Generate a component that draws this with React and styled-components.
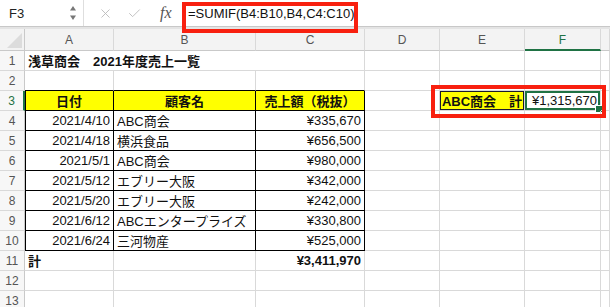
import React from 'react';
import styled, { createGlobalStyle } from 'styled-components';
import { X, Check } from 'lucide-react';

const GlobalStyle = createGlobalStyle`
  html, body { margin: 0; padding: 0; background: #fff; }
  body { font-family: "Liberation Sans", "Noto Sans CJK JP", sans-serif; }
  * { box-sizing: border-box; }
`;

const GRID = '#d9d9d9';
const GREEN = '#1f7244';

const Page = styled.div`
  position: relative;
  width: 610px;
  height: 307px;
  overflow: hidden;
  background: #fff;
`;

// barre de formule
const Toolbar = styled.div`
  display: flex;
  height: 27px;
  border-bottom: 1px solid #c8c8c8;
  background: #fff;
`;

const NameBox = styled.div`
  display: flex;
  align-items: center;
  justify-content: space-between;
  width: 84px;
  padding: 0 6px 0 9px;
  font-size: 13px;
  color: #222;
  border-right: 1px solid #dedede;
`;

const Spin = styled.svg`
  display: block;
`;

const Actions = styled.div`
  display: flex;
  align-items: center;
  width: 98px;
  padding-left: 14px;
  gap: 14px;
  color: #b9b9b9;
`;

const Fx = styled.span`
  margin-left: 4px;
  font-family: "Liberation Serif", serif;
  font-style: italic;
  font-size: 16px;
  color: #555;
`;

const Formula = styled.div`
  flex: 1;
  display: flex;
  align-items: center;
  padding-left: 6px;
  font-size: 13px;
  color: #111;
`;

const Band = styled.div`
  height: 2px;
  background: #e4e4e4;
`;

const Sheet = styled.div`
  display: grid;
  grid-template-columns: 25px 89px 142px 109px 75px 85px 76px 1fr;
  grid-template-rows: 22px repeat(13, 20px);
`;

const Corner = styled.div`
  position: relative;
  background: #f3f3f3;
  border-right: 1px solid #c9c9c9;
  border-bottom: 1px solid #c9c9c9;

  &::after {
    content: '';
    position: absolute;
    right: 2px;
    bottom: 2px;
    border-style: solid;
    border-width: 0 0 15px 15px;
    border-color: transparent transparent #dcdcdc transparent;
  }
`;

const ColHead = styled.div`
  display: flex;
  align-items: center;
  justify-content: center;
  background: #f3f3f3;
  border-right: 1px solid ${GRID};
  border-bottom: ${(p) => (p.$active ? `2px solid ${GREEN}` : '1px solid #c9c9c9')};
  font-size: 12px;
  color: ${(p) => (p.$active ? GREEN : '#555')};
  padding-top: ${(p) => (p.$active ? '1px' : '0')};
`;

const RowHead = styled.div`
  display: flex;
  align-items: center;
  justify-content: center;
  background: #f7f7f7;
  border-right: ${(p) => (p.$active ? `2px solid ${GREEN}` : '1px solid #c9c9c9')};
  border-bottom: 1px solid ${GRID};
  font-size: 12px;
  color: ${(p) => (p.$active ? GREEN : '#555')};
`;

const Cell = styled.div`
  position: relative;
  display: flex;
  align-items: center;
  justify-content: ${(p) => (p.$align === 'right' ? 'flex-end' : p.$align === 'center' ? 'center' : 'flex-start')};
  padding: 0 3px;
  grid-column: ${(p) => (p.$span ? `span ${p.$span}` : 'auto')};
  white-space: nowrap;
  font-size: 13px;
  font-weight: ${(p) => (p.$bold ? 700 : 400)};
  color: #111;
  background: ${(p) => p.$bg || 'transparent'};
  border-right: 1px solid ${(p) => (p.$edgeR ? '#000' : GRID)};
  border-bottom: 1px solid ${(p) => (p.$edgeB ? '#000' : GRID)};
  box-shadow: ${(p) =>
    p.$boxed ? 'inset 0 0 0 1px #1a1a2a' : p.$edgeL ? 'inset 1px 0 0 #000' : 'none'};
`;

const Selected = styled(Cell)`
  box-shadow: inset 0 0 0 2px ${GREEN};

  &::after {
    content: '';
    position: absolute;
    right: -3px;
    bottom: -3px;
    width: 6px;
    height: 6px;
    background: ${GREEN};
    border: 1px solid #fff;
  }
`;

// cadres rouges d'annotation
const RedBox = styled.div`
  position: absolute;
  border: 4px solid #f8200f;
  pointer-events: none;
`;

const cols = ['A', 'B', 'C', 'D', 'E', 'F', ''];

const ventes = [
  ['2021/4/10', 'ABC商会', '¥335,670'],
  ['2021/4/18', '横浜食品', '¥656,500'],
  ['2021/5/1', 'ABC商会', '¥980,000'],
  ['2021/5/12', 'エブリー大阪', '¥342,000'],
  ['2021/5/20', 'エブリー大阪', '¥242,000'],
  ['2021/6/12', 'ABCエンタープライズ', '¥330,800'],
  ['2021/6/24', '三河物産', '¥525,000'],
];

const Empty = ({ n }) => Array.from({ length: n }, (_, i) => <Cell key={i} />);

const App = () => {
  return (
    <Page>
      <GlobalStyle />
      <Toolbar>
        <NameBox>
          F3
          <Spin width="8" height="18" viewBox="0 0 8 18">
            <path d="M4 2 L7 6.5 L1 6.5 Z" fill="#777" />
            <path d="M4 16 L7 11.5 L1 11.5 Z" fill="#777" />
          </Spin>
        </NameBox>
        <Actions>
          <X size={15} strokeWidth={1.4} />
          <Check size={15} strokeWidth={1.4} />
          <Fx>fx</Fx>
        </Actions>
        <Formula>=SUMIF(B4:B10,B4,C4:C10)</Formula>
      </Toolbar>
      <Band />
      <Sheet>
        <Corner />
        {cols.map((c, i) => (
          <ColHead key={i} $active={c === 'F'}>{c}</ColHead>
        ))}

        {/* ligne 1 */}
        <RowHead>1</RowHead>
        <Cell $span={3} $bold>浅草商会　2021年度売上一覧</Cell>
        <Empty n={4} />

        {/* ligne 2 */}
        <RowHead>2</RowHead>
        <Cell $edgeB />
        <Cell $edgeB />
        <Cell $edgeB />
        <Empty n={4} />

        {/* ligne 3 : en-têtes du tableau */}
        <RowHead $active>3</RowHead>
        <Cell $bg="#ffff00" $bold $align="center" $edgeR $edgeB $edgeL>日付</Cell>
        <Cell $bg="#ffff00" $bold $align="center" $edgeR $edgeB>顧客名</Cell>
        <Cell $bg="#ffff00" $bold $align="center" $edgeR $edgeB>売上額（税抜）</Cell>
        <Cell />
        <Cell $bg="#ffff00" $bold $align="center" $boxed>ABC商会　計</Cell>
        <Selected $align="right">¥1,315,670</Selected>
        <Cell />

        {ventes.map((v, i) => (
          <React.Fragment key={i}>
            <RowHead>{i + 4}</RowHead>
            <Cell $align="right" $edgeR $edgeB $edgeL>{v[0]}</Cell>
            <Cell $edgeR $edgeB>{v[1]}</Cell>
            <Cell $align="right" $edgeR $edgeB>{v[2]}</Cell>
            <Empty n={4} />
          </React.Fragment>
        ))}

        {/* ligne 11 : total */}
        <RowHead>11</RowHead>
        <Cell $bold>計</Cell>
        <Cell />
        <Cell $bold $align="right">¥3,411,970</Cell>
        <Empty n={4} />

        {[12, 13].map((r) => (
          <React.Fragment key={r}>
            <RowHead>{r}</RowHead>
            <Empty n={7} />
          </React.Fragment>
        ))}
      </Sheet>

      <RedBox style={{ left: 182, top: 2, width: 176, height: 31 }} />
      <RedBox style={{ left: 431, top: 85, width: 175, height: 33 }} />
    </Page>
  );
};

export default App;
